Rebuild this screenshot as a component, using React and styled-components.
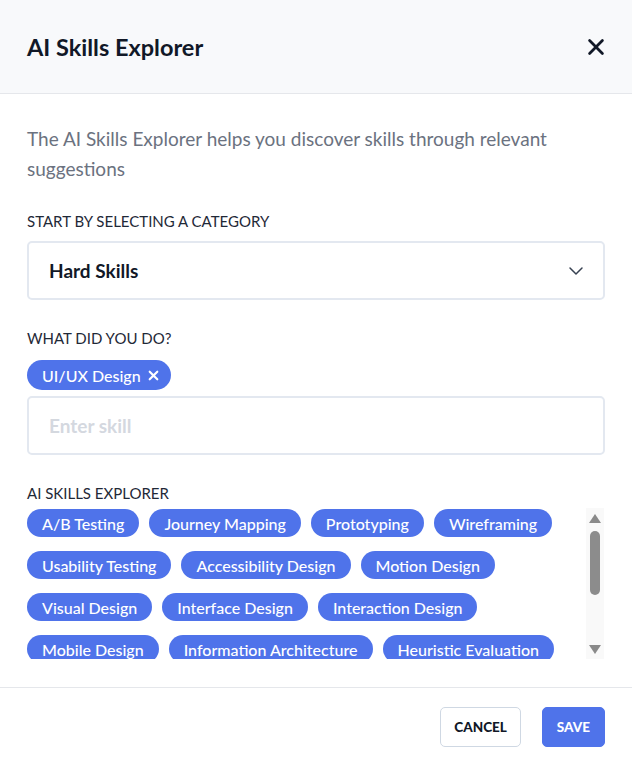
import React, { useState } from "react";
import styled, { createGlobalStyle } from "styled-components";

const GlobalStyle = createGlobalStyle`
  html, body {
    margin: 0;
    padding: 0;
    background: #ffffff;
  }
  body {
    font-family: "Lato", "Noto Sans", sans-serif;
    color: #111827;
  }
  * {
    box-sizing: border-box;
  }
`;

const Modal = styled.div`
  width: 632px;
  height: 765px;
  display: flex;
  flex-direction: column;
  background: #ffffff;
`;

const Header = styled.header`
  height: 94px;
  padding: 0 27px;
  display: flex;
  align-items: center;
  justify-content: space-between;
  background: #f8f9fb;
  border-bottom: 1px solid #e5e7eb;
`;

const Title = styled.h1`
  margin: 0;
  font-size: 23.5px;
  font-weight: 700;
  color: #111827;
`;

const CloseButton = styled.button`
  border: 0;
  background: none;
  padding: 0;
  width: 24px;
  height: 24px;
  display: flex;
  align-items: center;
  justify-content: center;
  color: #111827;
  cursor: pointer;
  margin-right: -3px;
`;

const Body = styled.div`
  flex: 1;
  padding: 30px 27px 0;
  display: flex;
  flex-direction: column;
`;

const Description = styled.p`
  margin: 0;
  font-size: 19px;
  line-height: 30px;
  color: #6b7280;
`;

const Label = styled.div`
  margin-top: ${(p) => p.$top}px;
  font-size: 15px;
  line-height: 20px;
  color: #1f2937;
  text-transform: uppercase;
`;

const Field = styled.div`
  margin-top: ${(p) => p.$top}px;
  height: 59px;
  border: 2px solid #e3e8f0;
  border-radius: 5px;
  padding: 0 18px 0 20px;
  display: flex;
  align-items: center;
  justify-content: space-between;
`;

const SelectValue = styled.span`
  font-size: 19px;
  font-weight: 700;
  color: #111827;
`;

const Input = styled.input`
  border: 0;
  outline: none;
  padding: 0;
  width: 100%;
  font-family: inherit;
  font-size: 19px;
  font-weight: 700;
  color: #111827;
  background: transparent;
  &::placeholder {
    color: #d4d8df;
  }
`;

const Chip = styled.span`
  display: inline-flex;
  align-items: center;
  gap: 6px;
  height: ${(p) => (p.$large ? 30 : 28)}px;
  padding: 0 ${(p) => (p.$large ? 11 : 15)}px 0 15px;
  border-radius: 15px;
  background: #4f73ea;
  color: #ffffff;
  font-size: 16px;
  font-weight: 500;
  white-space: nowrap;
`;

const SelectedRow = styled.div`
  margin-top: 12px;
  display: flex;
`;

const SkillsArea = styled.div`
  margin-top: 5px;
  height: 151px;
  display: flex;
  align-items: stretch;
`;

const SkillList = styled.div`
  flex: 1;
  overflow-y: auto;
  scrollbar-width: none;
  padding-top: 1px;
`;

const SkillGrid = styled.div`
  display: flex;
  flex-wrap: wrap;
  gap: 14px 10px;
`;

const Scrollbar = styled.div`
  width: 18px;
  margin-right: 1px;
  background: #f9f9f9;
  display: flex;
  flex-direction: column;
  align-items: center;
  padding: 6px 0 5px;
`;

const ScrollTrack = styled.div`
  flex: 1;
  width: 100%;
  padding: 8px 4px 0;
`;

const ScrollThumb = styled.div`
  width: 10px;
  height: 64px;
  margin: 0 auto;
  border-radius: 5px;
  background: #8c8c8c;
`;

const Footer = styled.footer`
  height: 78px;
  border-top: 1px solid #e5e7eb;
  padding: 0 27px;
  display: flex;
  align-items: center;
  justify-content: flex-end;
  gap: 21px;
`;

const Button = styled.button`
  height: 40px;
  padding: 0 ${(p) => (p.$primary ? 14 : 13)}px;
  border-radius: 5px;
  border: 1px solid ${(p) => (p.$primary ? "#4f73ea" : "#cfd8e3")};
  background: ${(p) => (p.$primary ? "#4f73ea" : "#ffffff")};
  color: ${(p) => (p.$primary ? "#ffffff" : "#111827")};
  font-family: inherit;
  font-size: 13.5px;
  font-weight: 900;
  text-transform: uppercase;
  cursor: pointer;
`;

const skills = [
  "A/B Testing",
  "Journey Mapping",
  "Prototyping",
  "Wireframing",
  "Usability Testing",
  "Accessibility Design",
  "Motion Design",
  "Visual Design",
  "Interface Design",
  "Interaction Design",
  "Mobile Design",
  "Information Architecture",
  "Heuristic Evaluation",
  "User Research",
  "Design Systems",
  "Persona Creation",
  "Card Sorting",
  "Responsive Design",
  "User Flows",
  "Service Design",
  "Design Thinking",
  "Storyboarding",
  "Content Strategy",
];

const XIcon = ({ size = 20, stroke = 3 }) => (
  <svg width={size} height={size} viewBox="0 0 24 24" fill="none" stroke="currentColor" strokeWidth={stroke} strokeLinecap="round">
    <path d="M5 5l14 14M19 5L5 19" />
  </svg>
);

const Chevron = () => (
  <svg width="18" height="18" viewBox="0 0 24 24" fill="none" stroke="#374151" strokeWidth="2" strokeLinecap="round" strokeLinejoin="round">
    <path d="M4 8l8 8 8-8" />
  </svg>
);

const Arrow = ({ down }) => (
  <svg width="12" height="9" viewBox="0 0 12 9">
    <path d={down ? "M0 0h12L6 9z" : "M6 0l6 9H0z"} fill="#8a8a8a" />
  </svg>
);

export default function App() {
  const [skill, setSkill] = useState("");
  return (
    <>
      <GlobalStyle />
      <Modal>
        <Header>
          <Title>AI Skills Explorer</Title>
          <CloseButton aria-label="Close">
            <XIcon size={22} stroke={3} />
          </CloseButton>
        </Header>
        <Body>
          <Description>
            The AI Skills Explorer helps you discover skills through relevant suggestions
          </Description>
          <Label $top={27}>Start by selecting a category</Label>
          <Field $top={10}>
            <SelectValue>Hard Skills</SelectValue>
            <Chevron />
          </Field>
          <Label $top={28}>What did you do?</Label>
          <SelectedRow>
            <Chip $large>
              UI/UX Design
              <XIcon size={13} stroke={4} />
            </Chip>
          </SelectedRow>
          <Field $top={6}>
            <Input
              value={skill}
              onChange={(e) => setSkill(e.target.value)}
              placeholder="Enter skill"
            />
          </Field>
          <Label $top={28}>AI Skills Explorer</Label>
          <SkillsArea>
            <SkillList>
              <SkillGrid>
                {skills.map((s) => (
                  <Chip key={s}>{s}</Chip>
                ))}
              </SkillGrid>
            </SkillList>
            <Scrollbar>
              <Arrow />
              <ScrollTrack>
                <ScrollThumb />
              </ScrollTrack>
              <Arrow down />
            </Scrollbar>
          </SkillsArea>
        </Body>
        <Footer>
          <Button>Cancel</Button>
          <Button $primary>Save</Button>
        </Footer>
      </Modal>
    </>
  );
}
